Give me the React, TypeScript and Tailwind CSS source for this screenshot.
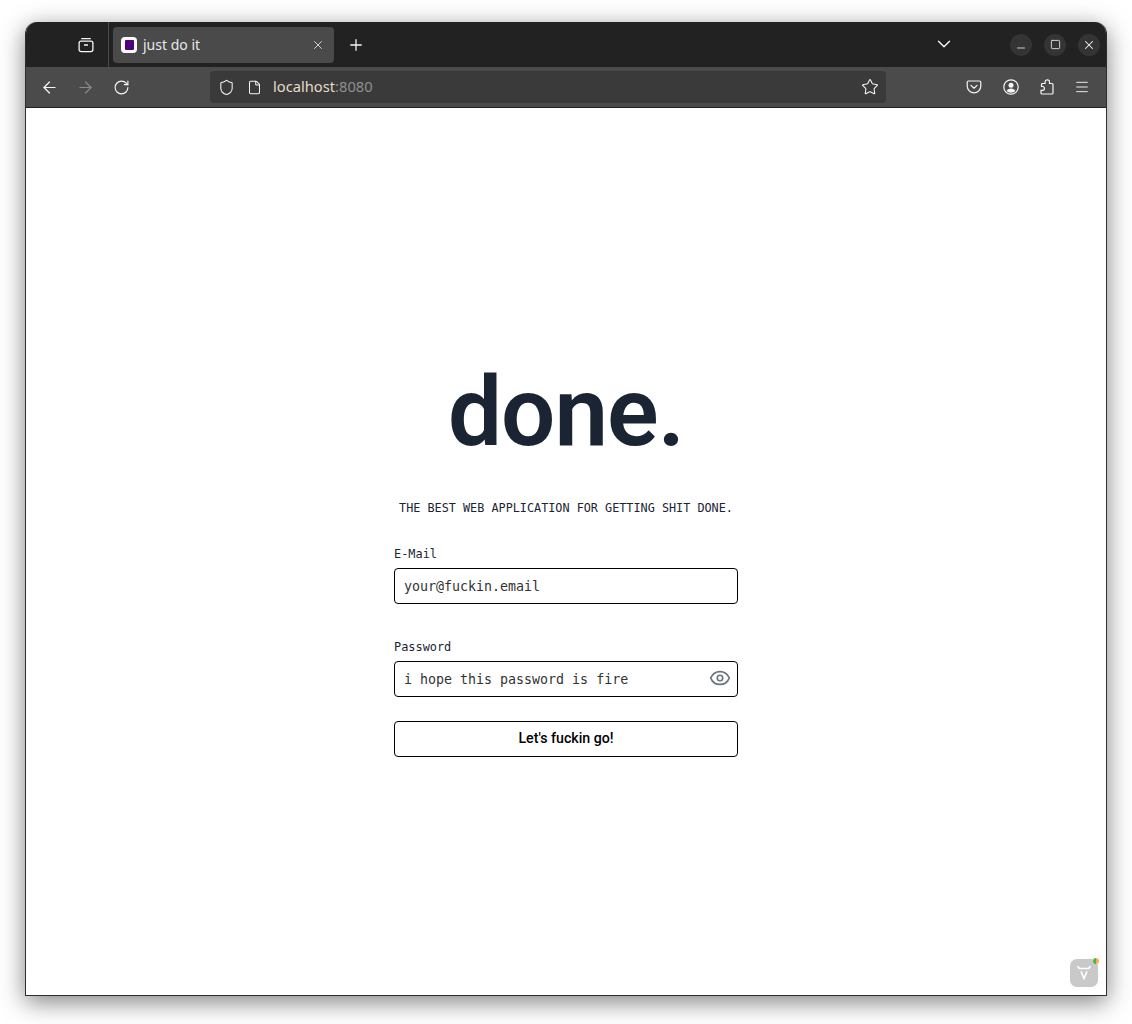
import { ArrowLeft, ArrowRight, ChevronDown, Eye, File, Menu, Minus, Plus, RotateCw, Shield, Square, Star, X } from "lucide-react";

const mono = "font-['DejaVu_Sans_Mono',monospace]";

const WindowButton = ({ children }: { children: React.ReactNode }) => (
  <div className="flex h-[22px] w-[22px] items-center justify-center rounded-full bg-[#343434] text-[#f4f4f4]">
    {children}
  </div>
);

const Field = ({ label, placeholder, children }: { label: string; placeholder: string; children?: React.ReactNode }) => (
  <div className="w-[344px]">
    <label className={`block h-[23px] text-[11.9px] leading-[18px] text-[#1a2433] ${mono}`}>{label}</label>
    <div className="relative">
      <input
        placeholder={placeholder}
        className={`h-[36px] w-full rounded-[4px] border border-black bg-white pl-[9px] pr-[36px] text-[13.3px] text-[#333] outline-none placeholder:text-[#333] ${mono}`}
      />
      {children}
    </div>
  </div>
);

export default function App() {
  return (
    <div className="h-[1024px] w-[1132px] overflow-hidden bg-white pl-[25px] pt-[22px]">
      <div className="relative flex h-[974px] w-[1082px] flex-col overflow-hidden rounded-t-[12px] border border-t-0 border-[#2e2e2e] bg-white shadow-[0_6px_24px_rgba(0,0,0,0.5)]">
        {/* tab strip */}
        <div className="flex h-[45px] shrink-0 items-center bg-[#222222] text-[#f6f6f6]">
          <div className="flex h-full w-[83px] items-center justify-end border-r border-[#4a4a4a] pr-[14px]">
            <svg width="16" height="16" viewBox="0 0 16 16" fill="none" stroke="currentColor" strokeWidth="1.3">
              <path d="M3.200 1.600h9.600" />
              <rect x="1.100" y="4.200" width="13.800" height="10.400" rx="2" />
              <path d="M6 8h4" />
            </svg>
          </div>
          <div className="ml-[4px] flex h-[36px] w-[221px] items-center rounded-[4px] bg-[#4a4a4a] pl-[8px] pr-[9px]">
            <div className="flex h-[16px] w-[16px] items-center justify-center rounded-[4px] bg-white">
              <div className="h-[10px] w-[9px] rounded-[1px] bg-[#50007f]" />
            </div>
            <span className="ml-[6px] flex-1 font-['Noto_Sans',sans-serif] text-[14px] text-[#e8e8e8]">just do it</span>
            <X size={14} strokeWidth={1.5} className="text-[#e4e4e4]" />
          </div>
          <Plus size={18} strokeWidth={1.7} className="ml-[13px]" />
          <div className="ml-auto flex items-center">
            <ChevronDown size={22} strokeWidth={1.5} className="mr-[55px] -translate-y-[1px]" />
            <div className="mr-[6px] flex gap-[12px]">
              <WindowButton><Minus size={12} strokeWidth={1.6} className="translate-y-[3px]" /></WindowButton>
              <WindowButton><Square size={11} strokeWidth={1.8} /></WindowButton>
              <WindowButton><X size={14} strokeWidth={1.8} /></WindowButton>
            </div>
          </div>
        </div>

        {/* nav bar */}
        <div className="flex h-[41px] shrink-0 items-center border-b border-[#222222] bg-[#4b4b4b] text-[#f6f6f6]">
          <ArrowLeft size={19} strokeWidth={1.5} className="ml-[14px]" />
          <ArrowRight size={19} strokeWidth={1.5} className="ml-[17px] text-[#8a8a8a]" />
          <RotateCw size={17} strokeWidth={1.6} className="ml-[18px]" />
          <div className="ml-[80px] flex h-[32px] w-[676px] items-center rounded-[4px] bg-[#3a3a3a] pl-[8px] pr-[7px]">
            <Shield size={17} strokeWidth={1.5} />
            <File size={15} strokeWidth={1.7} className="ml-[12px]" />
            <span className="mb-[2px] ml-[11px] font-['Noto_Sans',sans-serif] text-[14.700px] leading-[20px] text-[#e6dcc8]">
              localhost<span className="text-[#8f8f8f]">:8080</span>
            </span>
            <Star size={18} strokeWidth={1.4} className="ml-auto" />
          </div>
          <svg className="ml-[80px]" width="16" height="16" viewBox="0 0 16 16" fill="none" stroke="currentColor" strokeWidth="1.2" strokeLinecap="round" strokeLinejoin="round">
            <path d="M2.600 2h10.800A1.400 1.400 0 0 1 14.800 3.400V7A6.800 6.800 0 0 1 1.200 7V3.400A1.400 1.400 0 0 1 2.600 2Z" />
            <path d="M5 6.400l3 2.800 3-2.800" />
          </svg>
          <svg className="ml-[21px]" width="16" height="16" viewBox="0 0 16 16" fill="none">
            <circle cx="8" cy="8" r="7.200" stroke="currentColor" strokeWidth="1.200" />
            <circle cx="8" cy="6.200" r="2.500" fill="currentColor" />
            <path d="M3.600 12c.6-1.800 2.400-2.600 4.400-2.600s3.800.8 4.400 2.600A6 6 0 0 1 8 13.800 6 6 0 0 1 3.600 12Z" fill="currentColor" />
          </svg>
          <svg className="ml-[20px]" width="16" height="16" viewBox="0 0 16 16" fill="none" stroke="currentColor" strokeWidth="1.200" strokeLinejoin="round">
            <path d="M3 15H13a1 1 0 0 0 1-1V5.500a1 1 0 0 0-1-1H10.500V3a2.200 2.200 0 0 0-4.400 0V4.500H3.500a1 1 0 0 0-1 1V7.500H3.500a1.900 1.900 0 0 1 0 3.800H2V14a1 1 0 0 0 1 1Z" />
          </svg>
          <Menu size={16} strokeWidth={1.4} className="ml-[19px]" />
        </div>

        {/* page */}
        <div className="flex flex-1 flex-col items-center">
          <h1 className="mt-[249px] h-[109px] font-['Roboto',sans-serif] text-[96px] font-semibold leading-[110px] tracking-[-1px] text-[#1a2433]">
            done.
          </h1>
          <p className={`mt-[33px] h-[18px] text-[11.8px] leading-[18px] text-[#1a2433] ${mono}`}>
            THE BEST WEB APPLICATION FOR GETTING SHIT DONE.
          </p>
          <form className="mt-[28px] flex flex-col">
            <Field label="E-Mail" placeholder="your@fuckin.email" />
            <div className="mt-[34px]">
              <Field label="Password" placeholder="i hope this password is fire">
                <Eye size={22} strokeWidth={1.8} className="absolute right-[7px] top-[6px] text-[#6b7280]" />
              </Field>
            </div>
            <button
              type="button"
              className="mt-[24px] h-[36px] w-[344px] rounded-[4px] border border-black bg-white font-['Roboto',sans-serif] text-[14.200px] font-medium text-black"
            >
              Let's fuckin go!
            </button>
          </form>
        </div>

        {/* extension badge */}
        <div className="absolute bottom-[8px] right-[8px] flex h-[28px] w-[28px] items-center justify-center rounded-[7px] bg-[#c9c9c9]">
          <svg width="18" height="18" viewBox="0 0 18 18" fill="none" stroke="white" strokeWidth="1.600">
            <path d="M3 2c0 2 .5 2.500 2.500 2.500h7c2 0 2.500-.5 2.500-2.500" />
            <path d="M6 7.500l3 7 3-7" />
          </svg>
          <div className="absolute -right-[1px] -top-[1px] h-[6px] w-[6px] rounded-full bg-[linear-gradient(90deg,#3fb950_50%,#f5b041_50%)]" />
        </div>
      </div>
    </div>
  );
}
